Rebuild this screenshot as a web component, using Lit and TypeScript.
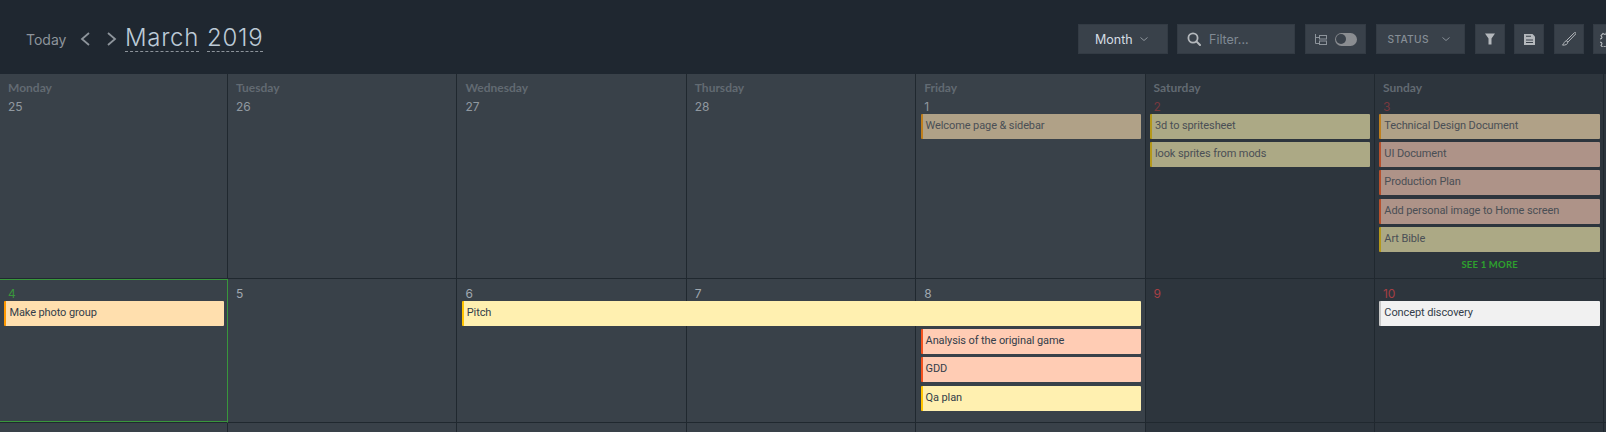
import { LitElement, html, css, svg } from 'lit';
import { customElement } from 'lit/decorators.js';

type Tone = 'orange' | 'yellow' | 'red' | 'white';
interface CalEvent { col: number; span?: number; slot: number; label: string; tone: Tone; }
interface Week { days: string[]; today?: number; events: CalEvent[]; }

const DAY_NAMES = ['Monday', 'Tuesday', 'Wednesday', 'Thursday', 'Friday', 'Saturday', 'Sunday'];

const WEEKS: Week[] = [
  {
    days: ['25', '26', '27', '28', '1', '2', '3'],
    events: [
      { col: 4, slot: 0, label: 'Welcome page & sidebar', tone: 'orange' },
      { col: 5, slot: 0, label: '3d to spritesheet', tone: 'yellow' },
      { col: 5, slot: 1, label: 'look sprites from mods', tone: 'yellow' },
      { col: 6, slot: 0, label: 'Technical Design Document', tone: 'orange' },
      { col: 6, slot: 1, label: 'UI Document', tone: 'red' },
      { col: 6, slot: 2, label: 'Production Plan', tone: 'red' },
      { col: 6, slot: 3, label: 'Add personal image to Home screen', tone: 'red' },
      { col: 6, slot: 4, label: 'Art Bible', tone: 'yellow' },
    ],
  },
  {
    days: ['4', '5', '6', '7', '8', '9', '10'],
    today: 0,
    events: [
      { col: 0, slot: 0, label: 'Make photo group', tone: 'orange' },
      { col: 2, span: 3, slot: 0, label: 'Pitch', tone: 'yellow' },
      { col: 4, slot: 1, label: 'Analysis of the original game', tone: 'red' },
      { col: 4, slot: 2, label: 'GDD', tone: 'red' },
      { col: 4, slot: 3, label: 'Qa plan', tone: 'yellow' },
      { col: 6, slot: 0, label: 'Concept discovery', tone: 'white' },
    ],
  },
  { days: ['', '', '', '', '', '', ''], events: [] },
];

const chevron = (w: number) => html`<svg class="chev" width=${w} height=${w} viewBox="0 0 10 10"><path d="M1.500 3.500 5 6.500l3.500-3" fill="none" stroke="currentColor" stroke-width="1"/></svg>`;

const ICONS = {
  search: svg`<circle cx="6" cy="6" r="4.600" fill="none" stroke="currentColor" stroke-width="1.800"/><path d="M9.400 9.400 13 13" stroke="currentColor" stroke-width="2" stroke-linecap="round"/>`,
  tree: svg`<path d="M.5 0v9.500h4M.5 3.500h4" fill="none" stroke="currentColor"/><rect x="4.500" y="1.500" width="7" height="3.500" fill="none" stroke="currentColor"/><rect x="4.500" y="7" width="7" height="3.500" fill="none" stroke="currentColor"/>`,
  funnel: svg`<path d="M0 .5h10L6.500 5.500V11.500H3.500V5.500z" fill="currentColor"/>`,
  save: svg`<path d="M0 0h8.500L11 2.500V11H0z" fill="currentColor"/><path d="M2 2.200h5M2 6h7M2 8.500h7" stroke="#39414a" stroke-width="1.100"/>`,
  brush: svg`<path d="M13.300 .8 5.600 8.400l1.500 1.500 7.600-7.900a.8.8 0 0 0-1.400-1.200z" fill="none" stroke="currentColor"/><path d="M5.300 8.900c-2 .2-2 2.400-3.800 4.200 2.800.3 5.300-.8 5.300-2.900z" fill="none" stroke="currentColor"/>`,
  gear: svg`<path d="M6.500 1h3l.4 1.900 1.400.6 1.700-1 2 2-1 1.700.6 1.400 1.900.4v3l-1.900.4-.6 1.400 1 1.700-2 2-1.700-1-1.400.6-.4 1.900h-3l-.4-1.900-1.400-.6-1.700 1-2-2 1-1.700-.6-1.400-1.900-.4v-3l1.900-.4.6-1.400-1-1.700 2-2 1.700 1 1.400-.6z" fill="none" stroke="currentColor" stroke-width="1.100"/>`,
};

@customElement('app-root')
export class AppRoot extends LitElement {
  static styles = css`
    :host {
      display: block;
      width: 1606px;
      height: 432px;
      overflow: hidden;
      background: #1f2730;
      font-family: "Lato", "Open Sans", sans-serif;
    }
    .topbar {
      display: flex;
      align-items: center;
      height: 74px;
      padding-top: 4px;
      box-sizing: border-box;
      background: #1f2730;
      overflow: hidden;
    }
    .nav {
      flex: none;
      display: flex;
      align-items: center;
      width: 1078px;
      padding-left: 26px;
      box-sizing: border-box;
      color: #8d949b;
    }
    .today { font: 400 14px "Inter", sans-serif; width: 54px; margin-top: 1px; }
    .arrow { width: 27px; height: 16px; flex: none; color: #8d949b; }
    .arrow.next { width: 18px; }
    .title { display: flex; gap: 8px; margin-top: -2px; }
    .title span {
      font: 300 24px/27px "Inter", sans-serif;
      color: #bccad6;
      letter-spacing: .7px;
      border-bottom: 1px dashed #8d949b;
    }
    .tools { flex: none; display: flex; gap: 9.5px; height: 30px; }
    .btn {
      flex: none;
      box-sizing: border-box;
      display: flex;
      align-items: center;
      justify-content: center;
      width: 30px;
      height: 30px;
      background: #39414a;
      border: 1px solid #333b44;
      color: #b4b8bc;
    }
    .month { width: 89.5px; justify-content: flex-start; padding-left: 16px; color: #d5dde4; font: 400 12.5px "Inter", sans-serif; }
    .month .chev { margin-left: 6px; color: #8d949b; }
    .filter { width: 118px; justify-content: flex-start; padding-left: 9px; color: #808a94; font: 400 12.5px "Inter", sans-serif; }
    .filter svg { margin-right: 8px; color: #b4b8bc; }
    .toggle { width: 61.500px; justify-content: flex-start; padding-left: 9px; color: #8d949b; }
    .switch {
      margin-left: 8px;
      width: 22px;
      height: 13px;
      border-radius: 6.5px;
      background: #8a8d91;
      display: flex;
      align-items: center;
      padding-left: 1.5px;
      box-sizing: border-box;
    }
    .knob { width: 10px; height: 10px; border-radius: 50%; background: #39414a; }
    .status {
      width: 89.500px;
      justify-content: flex-start;
      padding-left: 11px;
      color: #868e96;
      font: 500 10.200px "Inter", sans-serif;
      letter-spacing: .3px;
    }
    .status .chev { margin-left: 12px; }

    .week {
      display: grid;
      grid-template-columns: 228px repeat(6, 229.400px) 1fr;
      box-sizing: border-box;
    }
    .first { grid-template-rows: 40px repeat(5, 28.200px) 1fr; height: 205px; }
    .second { grid-template-rows: 22px repeat(4, 28.200px) 1fr; height: 144px; }
    .third { grid-template-rows: 1fr; height: 10px; }
    .cell {
      grid-row: 1 / -1;
      background: #394149;
      border-right: 1px solid #20282f;
      border-bottom: 1px solid #20282f;
      box-sizing: border-box;
    }
    .cell.weekend { background: #2d353d; }
    .cell.current {
      border-right-color: #39963c;
      box-shadow: inset 0 1px 0 #39963c, inset 0 -1px 0 #39963c;
    }
    .filler { grid-row: 1 / -1; grid-column: 8; background: #2d353d; border-bottom: 1px solid #20282f; }
    .head {
      grid-row: 1;
      padding-left: 8px;
      display: flex;
      flex-direction: column;
      justify-content: flex-end;
    }
    .name { font-size: 12px; line-height: 14px; font-weight: 700; color: #626a72; margin-bottom: 5px; }
    .date { font: 400 12px/14px "Inter", sans-serif; color: #a0a8b0; }
    .head.weekend .date { color: #a63f44; }
    .head.current .date { color: #39963c; }
    .past .head .date { opacity: .85; }
    .past .head.weekend .date { color: #85393f; }

    .event {
      box-sizing: border-box;
      height: 25px;
      margin: 0 4.500px 0 4.400px;
      padding-left: 3px;
      border-left: 2px solid;
      border-radius: 1px;
      font: 400 11px/24px "Roboto", sans-serif;
      letter-spacing: -.1px;
      white-space: nowrap;
      overflow: hidden;
      color: #333d4a;
    }
    .orange { background: #ffdfae; border-color: #ff9800; }
    .yellow { background: #fff0b0; border-color: #ffc400; }
    .red { background: #ffccb4; border-color: #f4511e; }
    .white { background: #f1f1f1; border-color: #c8c8c8; }
    .past .event { color: #4a4f55; }
    .past .orange { background: #b0a187; border-color: #c07f1c; }
    .past .yellow { background: #aca985; border-color: #b4981a; }
    .past .red { background: #ae9388; border-color: #b8502c; }
    .more {
      grid-column: 7;
      grid-row: 7;
      text-align: center;
      font: 700 9.500px/11px "Lato", sans-serif;
      letter-spacing: .2px;
      color: #2ea02e;
      padding-top: 4px;
    }
  `;

  renderWeek(week: Week, index: number) {
    const cls = ['first past', 'second', 'third'][index];
    return html`<div class="week ${cls}">
      ${week.days.map((_, i) => html`<div class="cell ${i > 4 ? 'weekend' : ''} ${week.today === i ? 'current' : ''}" style="grid-column:${i + 1}"></div>`)}
      <div class="filler"></div>
      ${week.days.map((d, i) => d ? html`<div class="head ${i > 4 ? 'weekend' : ''} ${week.today === i ? 'current' : ''}" style="grid-column:${i + 1}">
        ${index === 0 ? html`<div class="name">${DAY_NAMES[i]}</div>` : ''}
        <div class="date">${d}</div>
      </div>` : '')}
      ${week.events.map(e => html`<div class="event ${e.tone}" style="grid-column:${e.col + 1} / span ${e.span ?? 1};grid-row:${e.slot + 2}">${e.label}</div>`)}
      ${index === 0 ? html`<div class="more">SEE 1 MORE</div>` : ''}
    </div>`;
  }

  render() {
    return html`
      <div class="topbar">
        <div class="nav">
          <div class="today">Today</div>
          <svg class="arrow" viewBox="0 0 27 16"><path d="M9 2 2 8l7 6" fill="none" stroke="currentColor" stroke-width="1.800"/></svg>
          <svg class="arrow next" viewBox="0 0 18 16"><path d="M1 2l7 6-7 6" fill="none" stroke="currentColor" stroke-width="1.800"/></svg>
          <div class="title"><span>March</span><span>2019</span></div>
        </div>
        <div class="tools">
          <div class="btn month">Month ${chevron(10)}</div>
          <div class="btn filter"><svg width="14" height="14" viewBox="0 0 14 14">${ICONS.search}</svg>Filter...</div>
          <div class="btn toggle"><svg width="12" height="11" viewBox="0 0 12 11">${ICONS.tree}</svg><div class="switch"><div class="knob"></div></div></div>
          <div class="btn status">STATUS ${chevron(10)}</div>
          <div class="btn"><svg width="10" height="12" viewBox="0 0 10 12">${ICONS.funnel}</svg></div>
          <div class="btn"><svg width="11" height="11" viewBox="0 0 11 11">${ICONS.save}</svg></div>
          <div class="btn"><svg width="15" height="15" viewBox="0 0 15 15">${ICONS.brush}</svg></div>
          <div class="btn"><svg width="16" height="16" viewBox="0 0 16 16">${ICONS.gear}</svg></div>
        </div>
      </div>
      ${WEEKS.map((w, i) => this.renderWeek(w, i))}
    `;
  }
}

declare global {
  interface HTMLElementTagNameMap {
    'app-root': AppRoot
  }
}
